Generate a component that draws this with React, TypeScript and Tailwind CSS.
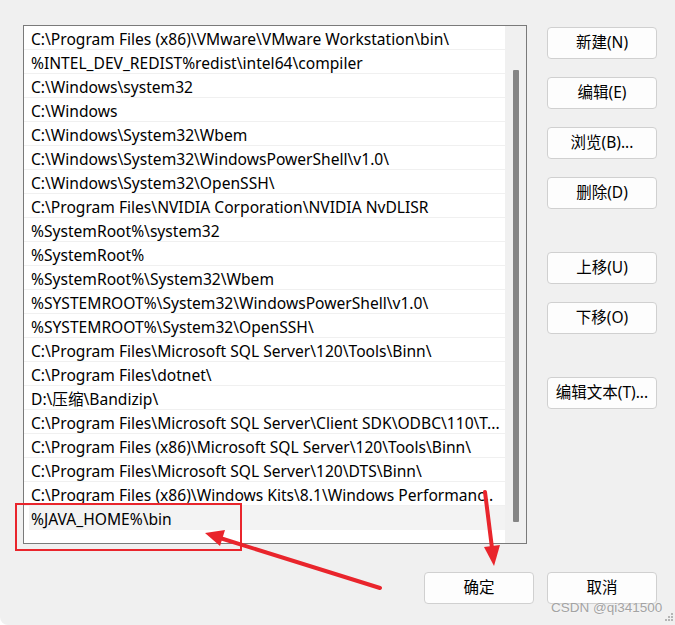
import React from "react";

const rows: string[] = [
  "C:\\Program Files (x86)\\VMware\\VMware Workstation\\bin\\",
  "%INTEL_DEV_REDIST%redist\\intel64\\compiler",
  "C:\\Windows\\system32",
  "C:\\Windows",
  "C:\\Windows\\System32\\Wbem",
  "C:\\Windows\\System32\\WindowsPowerShell\\v1.0\\",
  "C:\\Windows\\System32\\OpenSSH\\",
  "C:\\Program Files\\NVIDIA Corporation\\NVIDIA NvDLISR",
  "%SystemRoot%\\system32",
  "%SystemRoot%",
  "%SystemRoot%\\System32\\Wbem",
  "%SYSTEMROOT%\\System32\\WindowsPowerShell\\v1.0\\",
  "%SYSTEMROOT%\\System32\\OpenSSH\\",
  "C:\\Program Files\\Microsoft SQL Server\\120\\Tools\\Binn\\",
  "C:\\Program Files\\dotnet\\",
  "D:\\压缩\\Bandizip\\",
  "C:\\Program Files\\Microsoft SQL Server\\Client SDK\\ODBC\\110\\T...",
  "C:\\Program Files (x86)\\Microsoft SQL Server\\120\\Tools\\Binn\\",
  "C:\\Program Files\\Microsoft SQL Server\\120\\DTS\\Binn\\",
  "C:\\Program Files (x86)\\Windows Kits\\8.1\\Windows Performanc..",
];

function Btn({ label, className = "" }: { label: string; className?: string }) {
  return (
    <div
      className={
        "w-[110px] h-[32px] flex items-center justify-center rounded-[4px] border border-[#d0d0d0] bg-[#fdfdfd] text-[15.5px] text-black " +
        className
      }
    >
      {label}
    </div>
  );
}

export default function App() {
  return (
    <div className="w-[675px] h-[625px] bg-white">
      <div className="relative w-[675px] h-[625px] bg-[#f0f0f0] rounded-bl-[8px] overflow-hidden font-['Noto_Sans','Noto_Sans_CJK_SC',sans-serif] text-black">
        <div className="flex pl-[23px] pt-[25px]">
          {/* list box */}
          <div className="w-[504px] h-[519px] border border-[#7a7a7a] bg-white flex">
            <div className="w-[481px] flex flex-col">
              {rows.map((r, i) => (
                <div
                  key={i}
                  className="h-[24px] border-b border-[#f0f0f0] pl-[7px] pt-[1px] text-[15.6px] leading-[24px] whitespace-nowrap overflow-hidden"
                >
                  {r}
                </div>
              ))}
              <div className="h-[24px] pl-[5px]">
                <div className="h-[24px] bg-[#f3f3f3] pl-[2px] pt-[1px] text-[15.6px] leading-[24px] whitespace-nowrap overflow-hidden">
                  %JAVA_HOME%\bin
                </div>
              </div>
            </div>
            <div className="w-[21px] bg-[#f0f0f0] flex justify-center pt-[44px]">
              <div className="w-[6px] h-[452px] bg-[#858585] rounded-[1px]" />
            </div>
          </div>
          {/* button column */}
          <div className="ml-[20px] pt-[2px] flex flex-col">
            <Btn label="新建(N)" />
            <Btn label="编辑(E)" className="mt-[18px]" />
            <Btn label="浏览(B)..." className="mt-[18px]" />
            <Btn label="删除(D)" className="mt-[18px]" />
            <Btn label="上移(U)" className="mt-[43px]" />
            <Btn label="下移(O)" className="mt-[18px]" />
            <Btn label="编辑文本(T)..." className="mt-[43px]" />
          </div>
        </div>
        <div className="flex justify-end gap-[13px] pr-[18px] mt-[28px]">
          <Btn label="确定" />
          <Btn label="取消" />
        </div>

        {/* annotation overlays */}
        <div className="absolute left-[15px] top-[503px] w-[227px] h-[48px] border-2 border-[#e9252c]" />
        <svg className="absolute left-0 top-0 pointer-events-none" width="675" height="625" viewBox="0 0 675 625">
          <line x1="380" y1="588" x2="220" y2="538" stroke="#e9252c" strokeWidth="4" strokeLinecap="round" />
          <polygon points="205,533 225,530 220,546" fill="#e9252c" />
          <line x1="485" y1="492" x2="492" y2="548" stroke="#e9252c" strokeWidth="4" strokeLinecap="round" />
          <polygon points="494,566 500,545 484,547" fill="#e9252c" />
        </svg>
        <div className="absolute left-[551px] top-[598px] text-[13.5px] leading-[20px] text-[#a3a3a3] font-['Liberation_Sans',sans-serif] [text-shadow:0_0_2px_#ffffff]">
          CSDN @qi341500
        </div>
        <svg className="absolute right-[1px] bottom-[1px]" width="12" height="12" viewBox="0 0 12 12">
          <rect x="9" y="1" width="2" height="2" fill="#b5b5b5" />
          <rect x="6" y="4" width="2" height="2" fill="#b5b5b5" />
          <rect x="9" y="4" width="2" height="2" fill="#b5b5b5" />
          <rect x="3" y="7" width="2" height="2" fill="#b5b5b5" />
          <rect x="6" y="7" width="2" height="2" fill="#b5b5b5" />
          <rect x="9" y="7" width="2" height="2" fill="#b5b5b5" />
        </svg>
      </div>
    </div>
  );
}
